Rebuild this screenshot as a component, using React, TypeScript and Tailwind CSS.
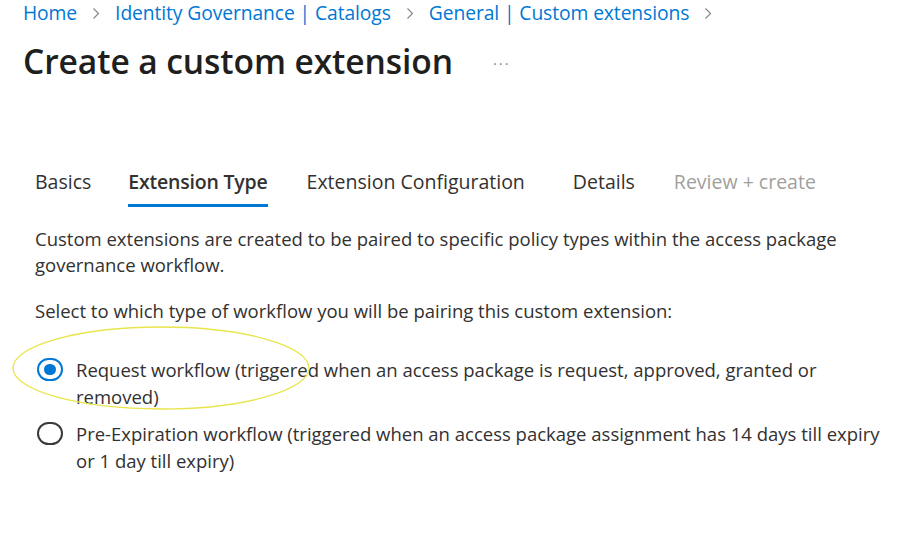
function Chevron() {
  return (
    <svg width="8" height="13" viewBox="0 0 8 13" className="mx-[15px] shrink-0">
      <path d="M1.5 1.5 L6.5 6.5 L1.5 11.5" fill="none" stroke="#8a8886" strokeWidth="1.2" />
    </svg>
  );
}

export default function App() {
  const tabs = [
    { label: "Basics", state: "normal", space: "mr-[37px]" },
    { label: "Extension Type", state: "active", space: "mr-[39px]" },
    { label: "Extension Configuration", state: "normal", space: "mr-[48px]" },
    { label: "Details", state: "normal", space: "mr-[39px]" },
    { label: "Review + create", state: "disabled", space: "" },
  ];

  const options = [
    {
      checked: true,
      text: "Request workflow (triggered when an access package is request, approved, granted or removed)",
    },
    {
      checked: false,
      text: "Pre-Expiration workflow (triggered when an access package assignment has 14 days till expiry or 1 day till expiry)",
    },
  ];

  return (
    <div
      className="relative w-[922px] h-[541px] bg-white overflow-hidden text-[#323130]"
      style={{ fontFamily: '"Open Sans", "Noto Sans", sans-serif' }}
    >
      {/* Breadcrumb */}
      <div className="flex items-center pl-[23px] pt-[1px] h-[25px] text-[19.3px] text-[#0078d4] tracking-[-0.1px]">
        <span>Home</span>
        <Chevron />
        <span>Identity Governance | Catalogs</span>
        <Chevron />
        <span>General | Custom extensions</span>
        <Chevron />
      </div>

      {/* Title */}
      <div className="flex items-center pl-[23px] mt-[17px] h-[40px]">
        <h1 className="text-[33.6px] font-semibold tracking-[-0.1px] leading-none text-[#201f1e]">
          Create a custom extension
        </h1>
        <span className="ml-[40px] -mt-[6px] text-[15px] text-[#8a8886] tracking-[2px]">...</span>
      </div>

      <div className="pl-[35px] pr-[30px]">
        {/* Tabs */}
        <div className="flex mt-[86px] text-[19.5px]">
          {tabs.map((t) => (
            <div key={t.label} className={`flex flex-col ${t.space}`}>
              <span
                className={
                  t.state === "active"
                    ? "font-semibold text-[#323130] leading-[28px] tracking-[-0.2px]"
                    : t.state === "disabled"
                    ? "text-[#a19f9d] leading-[28px]"
                    : "text-[#323130] leading-[28px]"
                }
              >
                {t.label}
              </span>
              <div className={`h-[3px] mt-[8px] ${t.state === "active" ? "bg-[#0078d4]" : "bg-transparent"}`}></div>
            </div>
          ))}
        </div>

        {/* Description */}
        <p className="mt-[19px] text-[18.5px] leading-[26px] max-w-[840px]">
          Custom extensions are created to be paired to specific policy types within the access package governance
          workflow.
        </p>
        <p className="mt-[20px] text-[18.5px] leading-[26px]">
          Select to which type of workflow you will be pairing this custom extension:
        </p>

        {/* Options */}
        <div className="mt-[32px] flex flex-col gap-[10px]">
          {options.map((o, i) => (
            <div key={i} className="flex items-start gap-[13px]">
              <div
                className={`mt-[2px] ml-[2px] w-[26px] h-[23px] rounded-full border-2 flex items-center justify-center shrink-0 ${
                  o.checked ? "border-[#0078d4]" : "border-[#3b3a39]"
                }`}
              >
                {o.checked && <div className="w-[12px] h-[11px] rounded-full bg-[#0078d4]"></div>}
              </div>
              <span className="text-[18.5px] leading-[27px] max-w-[808px]">{o.text}</span>
            </div>
          ))}
        </div>
      </div>

      {/* Annotation ellipse */}
      <svg className="absolute left-[10px] top-[324px]" width="302" height="88" viewBox="0 0 302 88">
        <ellipse cx="151" cy="44" rx="148" ry="41" fill="none" stroke="#e8e54a" strokeWidth="1.3" />
      </svg>
    </div>
  );
}
